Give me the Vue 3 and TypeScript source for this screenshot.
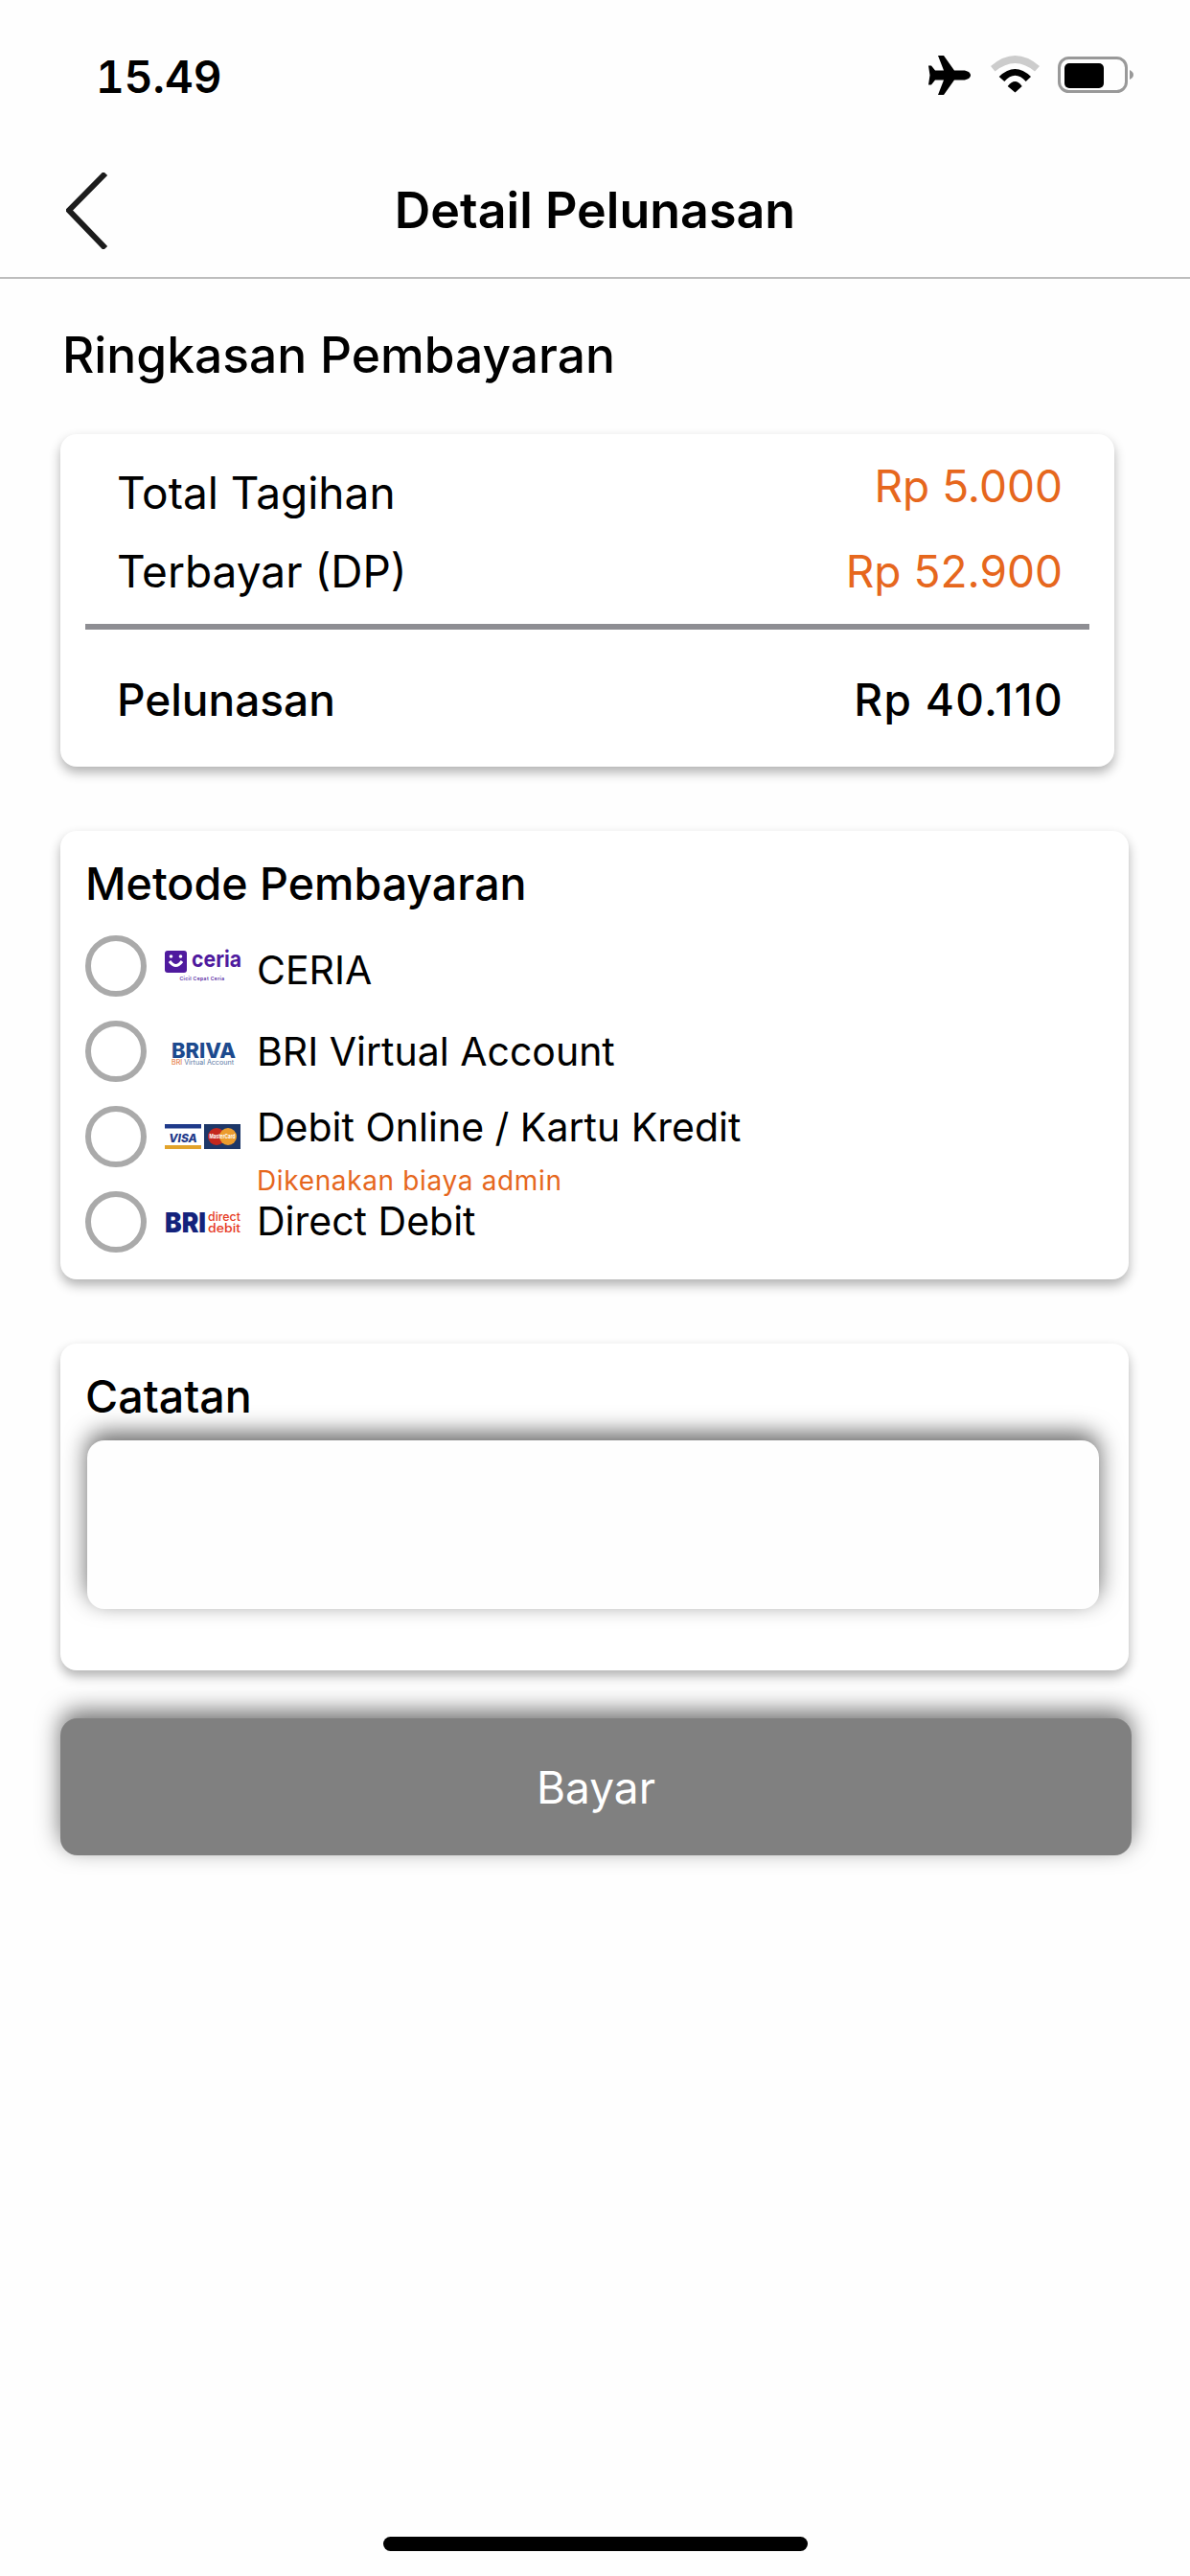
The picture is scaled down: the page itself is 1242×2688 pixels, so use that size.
<script setup lang="ts">
const summary = [
  { label: 'Total Tagihan', amount: 'Rp 5.000', kind: 'raised' },
  { label: 'Terbayar (DP)', amount: 'Rp 52.900', kind: 'plain' },
]
</script>

<template>
  <div class="page">
    <div class="status">
      <span class="time">15.49</span>
      <div class="status-icons">
        <svg class="plane" width="45" height="41" viewBox="0 0 45 41">
          <path d="M45 20.5C45 18 42 15.5 37 15.5L28 15.5L17 0L11 0L17 15.5L8 15.5L4 10.5L1 10.5L2.5 20.5L1 30.5L4 30.5L8 25.5L17 25.5L11 41L17 41L28 25.5L37 25.5C42 25.5 45 23 45 20.5Z" fill="#000" />
        </svg>
        <svg class="wifi" width="51" height="39" viewBox="0 0 51 39">
          <path d="M0 11Q25.5 -11 51 11L46 16.5Q25.5 -0.5 4.5 16.5Z" fill="#cccccc" />
          <path d="M8.7 22Q25.5 6 42 22L36.7 27Q25.5 14.4 14.3 27Z" fill="#000" />
          <path d="M17.7 32Q25.5 22 32.7 32L25.5 38.5Z" fill="#000" />
        </svg>
        <svg class="battery" width="79" height="38" viewBox="0 0 79 38">
          <rect x="1.5" y="1.5" width="70" height="35" rx="10" fill="none" stroke="#999" stroke-width="3" />
          <rect x="7" y="7" width="41" height="26" rx="5" fill="#000" />
          <path d="M75 14C77.5 15 79 17 79 19C79 21 77.5 23 75 24Z" fill="#999" />
        </svg>
      </div>
    </div>

    <header class="nav">
      <svg class="back" width="44" height="80" viewBox="0 0 44 80">
        <path d="M41 1L3 39.5L41 79" fill="none" stroke="#1c1c1c" stroke-width="6" />
      </svg>
      <h1 class="title">Detail Pelunasan</h1>
      <span></span>
    </header>

    <main class="content">
      <h2 class="section">Ringkasan Pembayaran</h2>

      <section class="card summary">
        <div v-for="row in summary" :key="row.label" class="sum-row">
          <span>{{ row.label }}</span>
          <span class="amount" :class="row.kind">{{ row.amount }}</span>
        </div>
        <div class="divider"></div>
        <div class="sum-row strong">
          <span>Pelunasan</span>
          <span class="total">Rp 40.110</span>
        </div>
      </section>

      <section class="card methods">
        <h3 class="card-title">Metode Pembayaran</h3>
        <div class="pay-list">
          <div class="pay-row">
            <span class="radio"></span>
            <svg class="logo" width="80" height="64" viewBox="0 0 80 64">
              <rect x="0" y="16" width="23" height="23" rx="3" fill="#4f1a9e" />
              <circle cx="6.5" cy="22" r="1.8" fill="#fff" />
              <circle cx="16.5" cy="22" r="1.8" fill="#fff" />
              <path d="M5 27Q11.5 36 18 27" fill="none" stroke="#fff" stroke-width="3" />
              <text x="28" y="33" class="l-ceria" textLength="52" lengthAdjust="spacingAndGlyphs">ceria</text>
              <text x="39" y="47" class="l-tag">Cicil Cepat Ceria</text>
            </svg>
            <div class="pay-text off-a"><span class="pay-label">CERIA</span></div>
          </div>
          <div class="pay-row">
            <span class="radio"></span>
            <svg class="logo" width="80" height="64" viewBox="0 0 80 64">
              <text x="7" y="39" class="l-briva" textLength="67" lengthAdjust="spacingAndGlyphs">BRIVA</text>
              <text x="7" y="46" class="l-sub" textLength="65" lengthAdjust="spacingAndGlyphs"><tspan fill="#e2672a">BRI</tspan> Virtual Account</text>
            </svg>
            <div class="pay-text off-b"><span class="pay-label">BRI Virtual Account</span></div>
          </div>
          <div class="pay-row">
            <span class="radio"></span>
            <svg class="logo" width="80" height="64" viewBox="0 0 80 64">
              <rect x="0" y="19" width="38" height="26" fill="#fff" />
              <rect x="0" y="19" width="38" height="4.5" fill="#1f3a8a" />
              <rect x="0" y="41" width="38" height="4" fill="#e2a32b" />
              <text x="19" y="38" class="l-visa" text-anchor="middle">VISA</text>
              <rect x="41" y="19" width="38" height="26" fill="#1d3768" />
              <circle cx="54" cy="32" r="9" fill="#c4281e" />
              <circle cx="66" cy="32" r="9" fill="#eb9c2d" />
              <text x="60" y="34" class="l-mc" text-anchor="middle" textLength="27" lengthAdjust="spacingAndGlyphs">MasterCard</text>
            </svg>
            <div class="pay-text off-c">
              <span class="pay-label">Debit Online / Kartu Kredit</span>
              <span class="pay-note">Dikenakan biaya admin</span>
            </div>
          </div>
          <div class="pay-row">
            <span class="radio"></span>
            <svg class="logo" width="80" height="64" viewBox="0 0 80 64">
              <text x="0" y="43" class="l-bri" textLength="43" lengthAdjust="spacingAndGlyphs">BRI</text>
              <text x="45" y="31" class="l-dd" textLength="34" lengthAdjust="spacingAndGlyphs">direct</text>
              <text x="45" y="43" class="l-dd" textLength="34" lengthAdjust="spacingAndGlyphs">debit</text>
            </svg>
            <div class="pay-text off-d"><span class="pay-label">Direct Debit</span></div>
          </div>
        </div>
      </section>

      <section class="card notes">
        <h3 class="card-title">Catatan</h3>
        <div class="note-box"></div>
      </section>

      <button class="pay-btn" type="button">Bayar</button>
    </main>

    <div class="home"></div>
  </div>
</template>

<style scoped>
.page {
  width: 1242px;
  height: 2688px;
  box-sizing: border-box;
  background: #fefefe;
  display: flex;
  flex-direction: column;
  font-family: Inter, "Liberation Sans", sans-serif;
  color: #000;
  overflow: hidden;
}
.status {
  height: 120px;
  box-sizing: border-box;
  padding: 52px 59px 0 100px;
  display: flex;
  justify-content: space-between;
  align-items: flex-start;
}
.time {
  font-size: 46px;
  line-height: 56px;
  font-weight: 600;
  font-feature-settings: "tnum" 1;
}
.status-icons {
  display: flex;
  align-items: flex-start;
  margin-top: 6px;
}
.wifi { margin-left: 21px; }
.battery { margin-left: 19px; margin-top: 1px; }
.nav {
  height: 171px;
  box-sizing: border-box;
  padding-top: 30px;
  border-bottom: 2px solid #bdbdbd;
  display: grid;
  grid-template-columns: 1fr auto 1fr;
  align-items: center;
}
.back { margin-left: 69px; }
.title {
  margin: 0;
  font-size: 52px;
  line-height: 60px;
  font-weight: 600;
}
.content {
  padding: 49px 0 0 63px;
  display: flex;
  flex-direction: column;
  align-items: flex-start;
}
.section {
  margin: 0 0 53px 2px;
  font-size: 51.5px;
  line-height: 60px;
  font-weight: 500;
}
.card {
  box-sizing: border-box;
  background: #fff;
  border-radius: 17px;
  box-shadow: 0 6px 12px rgba(0, 0, 0, 0.3);
}
.summary {
  width: 1100px;
  height: 347px;
  padding: 31px 26px 0;
  display: flex;
  flex-direction: column;
}
.sum-row {
  display: flex;
  justify-content: space-between;
  padding: 0 28px 0 33px;
  font-size: 46px;
  line-height: 60px;
  margin-bottom: 22px;
}
.amount { color: #e6671d; }
.amount.raised { margin-top: -7px; }
.divider {
  height: 6px;
  background: #8e8e93;
  margin-top: 3px;
  margin-bottom: 43px;
}
.strong { font-weight: 500; margin-bottom: 0; }
.total { letter-spacing: 1.3px; margin-right: -1px; }
.methods {
  width: 1115px;
  height: 468px;
  margin-top: 67px;
  padding: 27px 26px 0;
}
.card-title {
  margin: 0;
  font-size: 46.6px;
  line-height: 56px;
  font-weight: 500;
}
.pay-list {
  margin-top: 26px;
  display: flex;
  flex-direction: column;
  gap: 25px;
}
.pay-row {
  height: 64px;
  display: flex;
  align-items: flex-start;
}
.radio {
  width: 64px;
  height: 64px;
  box-sizing: border-box;
  border: 6px solid #aaaaaa;
  border-radius: 50%;
  flex: none;
}
.logo {
  margin-left: 19px;
  flex: none;
  overflow: visible;
}
.pay-text {
  margin-left: 16px;
  display: flex;
  flex-direction: column;
}
.off-a { margin-top: 11px; }
.off-b { margin-top: 7px; }
.off-c { margin-top: -3px; }
.off-d { margin-top: 6px; }
.pay-label {
  font-size: 41px;
  line-height: 50px;
  white-space: nowrap;
}
.pay-note {
  margin-top: 14px;
  font-size: 28px;
  line-height: 34px;
  letter-spacing: 0.65px;
  color: #e6671d;
  white-space: nowrap;
}
.l-ceria { font: 700 24px Inter, sans-serif; fill: #4f1a9e; }
.l-tag { font: 600 5px Inter, sans-serif; fill: #4f1a9e; text-anchor: middle; letter-spacing: 0.4px; }
.l-briva { font: 800 22px Inter, sans-serif; fill: #1c4a8e; }
.l-sub { font: 400 7px Inter, sans-serif; fill: #5b7aa5; }
.l-visa { font: italic 800 12px Inter, sans-serif; fill: #1f3a8a; }
.l-mc { font: 700 6px Inter, sans-serif; fill: #fff; }
.l-bri { font: 900 29px Inter, sans-serif; fill: #14237c; }
.l-dd { font: 500 12.5px Inter, sans-serif; fill: #e63b1f; }
.notes {
  width: 1115px;
  height: 341px;
  margin-top: 67px;
  padding: 27px 31px 0 28px;
}
.notes .card-title { margin-left: -2px; }
.note-box {
  margin-top: 18px;
  height: 176px;
  border-radius: 18px;
  background: #fefefe;
  box-shadow: 0 -8px 24px rgba(0, 0, 0, 0.6);
}
.pay-btn {
  width: 1118px;
  height: 143px;
  margin-top: 50px;
  border: 0;
  border-radius: 18px;
  background: #808080;
  color: #fff;
  font-family: inherit;
  font-size: 46px;
  box-shadow: 0 -8px 24px rgba(0, 0, 0, 0.55);
  padding: 0;
}
.home {
  width: 443px;
  height: 15px;
  border-radius: 8px;
  background: #000;
  margin: auto 0 26px 400px;
}
</style>

<style>
html, body { margin: 0; background: #fefefe; }
</style>
